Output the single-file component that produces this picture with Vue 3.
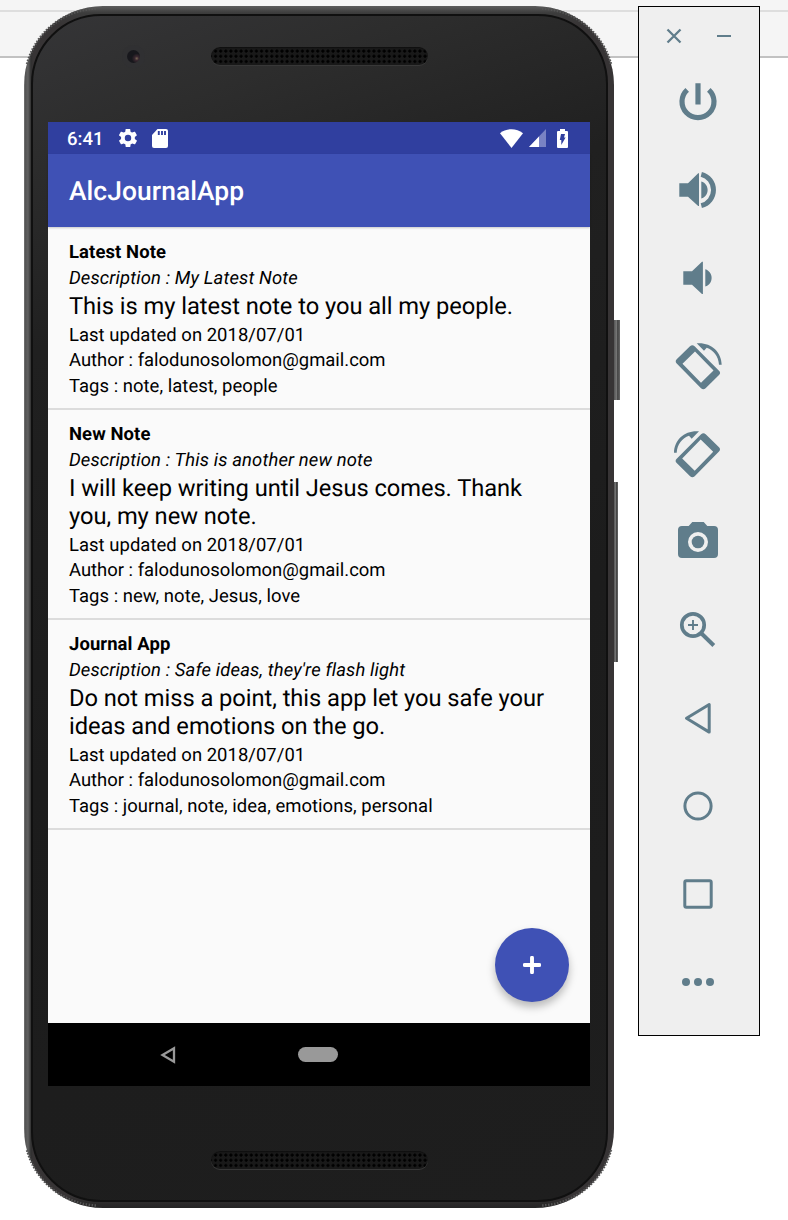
<script setup>
const notes = [
  { title: 'Latest Note', description: 'My Latest Note', body: ['This is my latest note to you all my people.'], tags: 'note, latest, people' },
  { title: 'New Note', description: 'This is another new note', body: ['I will keep writing until Jesus comes. Thank', 'you, my new note.'], tags: 'new, note, Jesus, love' },
  { title: 'Journal App', description: "Safe ideas, they're flash light", body: ['Do not miss a point, this app let you safe your', 'ideas and emotions on the go.'], tags: 'journal, note, idea, emotions, personal' }
]
</script>

<template>
  <div class="page">
    <div class="phone">
      <svg class="knurl" viewBox="0 0 590 1202">
        <path d="M3 58A75 75 0 0 1 72 2.500M518 2.500A75 75 0 0 1 587 58M587 1144A75 75 0 0 1 518 1199.500M72 1199.500A75 75 0 0 1 3 1144" />
      </svg>
      <div class="face">
        <div class="top-bezel">
          <span class="camera"><i></i></span>
          <span class="speaker"></span>
        </div>
        <div class="screen">
          <div class="status">
            <span class="clock">6:41</span>
            <svg class="gear" width="22" height="22" viewBox="0 0 24 24"><path fill="#fff" d="M19.4 13c0-.3.1-.6.1-1s0-.7-.1-1l2.1-1.6c.2-.2.2-.4.1-.6l-2-3.5c-.1-.2-.4-.3-.6-.2l-2.5 1c-.5-.4-1.1-.7-1.7-1l-.4-2.6c0-.2-.2-.4-.5-.4h-4c-.2 0-.4.2-.5.4L9 5.100c-.6.3-1.200.6-1.700 1l-2.500-1c-.2-.1-.5 0-.6.2l-2 3.500c-.1.2-.1.5.1.6L4.500 11c0 .3-.1.700-.1 1s0 .7.100 1l-2.100 1.600c-.2.2-.2.4-.1.6l2 3.500c.1.2.4.3.6.2l2.500-1c.5.4 1.100.7 1.700 1l.4 2.600c0 .2.2.4.5.4h4c.2 0 .5-.2.5-.4l.4-2.600c.6-.3 1.200-.6 1.700-1l2.500 1c.2.1.5 0 .6-.2l2-3.500c.1-.2.1-.5-.1-.6L19.400 13zM12 15.500a3.500 3.500 0 1 1 0-7 3.500 3.500 0 0 1 0 7z"/></svg>
            <svg class="sd" width="16" height="19" viewBox="0 0 16 19"><path fill="#fff" d="M5.500 0H14q2 0 2 2V17q0 2-2 2H2q-2 0-2-2V6z"/><path stroke="#303f9f" stroke-width="1.900" d="M6.800 2v4M10 2v4M13 2v4"/></svg>
            <svg class="wifi" width="23" height="19" viewBox="0 0 23 19"><path fill="#fff" d="M0 4.200C6.500-1.100 16.500-1.100 23 4.200L11.500 19z"/></svg>
            <svg class="signal" width="17" height="18" viewBox="0 0 17 18"><path fill="#7a83c4" d="M17 0V18H0z"/><path fill="#fff" d="M10 7.400V18H0z"/></svg>
            <svg width="11" height="19" viewBox="0 0 11 19"><path fill="#fff" d="M3 0h5v2h2q1 0 1 1v15q0 1-1 1H1q-1 0-1-1V3q0-1 1-1h2z"/><path fill="#303f9f" d="M4 5h4L7 8.500h1.600L4.300 16V11H2.800z"/></svg>
          </div>
          <header class="appbar">AlcJournalApp</header>
          <main class="list">
            <article v-for="n in notes" :key="n.title" class="note">
              <strong>{{ n.title }}</strong>
              <em>Description : {{ n.description }}</em>
              <p><span v-for="l in n.body" :key="l">{{ l }}</span></p>
              <div class="meta">Last updated on 2018/07/01</div>
              <div>Author : falodunosolomon@gmail.com</div>
              <div class="meta">Tags : {{ n.tags }}</div>
            </article>
            <button class="fab" aria-label="Add"><svg width="18" height="18" viewBox="0 0 18 18"><path d="M9 1.700V16.300M1.700 9H16.300" stroke="#fff" stroke-width="3.900" stroke-linecap="round"/></svg></button>
          </main>
          <nav class="nav">
            <svg width="16" height="18" viewBox="0 0 16 18"><path d="M2.500 9L14 2.300V15.700z" fill="none" stroke="#999" stroke-width="2.300"/></svg>
            <span class="pill"></span>
          </nav>
        </div>
        <div class="bottom-bezel"><span class="speaker"></span></div>
      </div>
      <i class="key power"></i>
      <i class="key volume"></i>
    </div>

    <aside class="tools">
      <div class="window">
        <svg width="16" height="16" viewBox="0 0 16 16"><path d="M1.500 1.500L14.500 14.500M14.500 1.500L1.500 14.500" class="line" stroke-width="2.300"/></svg>
        <svg width="16" height="16" viewBox="0 0 16 16"><path d="M1 8H15" class="line" stroke-width="2"/></svg>
      </div>
      <svg viewBox="0 0 60 60"><path class="line" stroke-width="5.200" d="M19.200 17.800A16 16 0 1 0 40.800 17.800M30 11.300V32.500"/></svg>
      <svg viewBox="0 0 60 60"><path class="fill" d="M11.300 23.300H20L30.200 13.300H31V46H30.200L20 36.700H11.300zM33.300 21.500C41.800 24 41.800 36.200 33.300 38.600z"/><path class="line" stroke-width="4.900" d="M33.300 14.300A16.200 16.200 0 0 1 33.300 45.700"/></svg>
      <svg viewBox="0 0 60 60"><path class="fill" d="M15.300 23.300H24L34 13.700H34.900V46H34L24 36.700H15.300zM37.300 21.300C45.800 24 45.800 36 37.300 38.600z"/></svg>
      <svg viewBox="0 0 60 60">
        <path class="fill" fill-rule="evenodd" d="M22 10.300Q24.300 8.200 26.600 10.300L51 34.700Q53.200 36.900 51 39L37.600 52.300Q35.300 54.300 33 52.300L8.700 27.500Q6.700 25.100 8.700 23.200zM27 15.400L14.500 27.700 33 46.700 45.500 34.500z"/>
        <path class="fill" d="M28.700 7.300C42.500 6 53.500 15.500 53.700 28.700H51C50.500 20.300 45.500 14 38.700 11.700L36 14.700z"/>
      </svg>
      <svg viewBox="0 0 60 60"><g transform="matrix(-1 0 0 1 59.7 0)">
        <path class="fill" fill-rule="evenodd" d="M22 10.300Q24.300 8.200 26.600 10.300L51 34.700Q53.200 36.900 51 39L37.600 52.300Q35.300 54.300 33 52.300L8.700 27.500Q6.700 25.100 8.700 23.200zM27 15.400L14.500 27.700 33 46.700 45.500 34.500z"/>
        <path class="fill" d="M28.700 7.300C42.500 6 53.500 15.500 53.700 28.700H51C50.500 20.300 45.500 14 38.700 11.700L36 14.700z"/>
      </g></svg>
      <svg viewBox="0 0 60 60"><path class="fill" fill-rule="evenodd" d="M14 14H20.700L24.300 10H35.700L39.300 14H46Q50 14 50 18V42Q50 46 46 46H14Q10 46 10 42V18Q10 14 14 14zM30 20A10 10 0 1 0 30 40A10 10 0 1 0 30 20z"/><circle class="fill" cx="30" cy="30" r="6.300"/></svg>
      <svg viewBox="0 0 60 60"><circle class="line" cx="25" cy="25" r="11.200" stroke-width="3.700"/><path class="line" stroke-width="1.900" d="M20 25H30M25 20V30"/><path class="line" stroke-width="4" d="M33 33L45.800 45.500"/></svg>
      <svg viewBox="0 0 60 60"><path class="line" stroke-width="3" stroke-linejoin="round" d="M18.500 30.300L41.200 16.500V44.100z"/></svg>
      <svg viewBox="0 0 60 60"><circle class="line" cx="30" cy="30" r="13.100" stroke-width="3"/></svg>
      <svg viewBox="0 0 60 60"><rect class="line" x="16.800" y="16.800" width="26.400" height="26.400" rx="1.500" stroke-width="3"/></svg>
      <svg viewBox="0 0 60 60"><circle class="fill" cx="18" cy="30" r="4"/><circle class="fill" cx="30" cy="30" r="4"/><circle class="fill" cx="42" cy="30" r="4"/></svg>
    </aside>
  </div>
</template>

<style>
body { margin: 0; background: #fff; }
</style>
<style scoped>
* { box-sizing: border-box; }
.page {
  width: 788px; height: 1220px; overflow: hidden; padding: 6px 0 0 24px;
  display: flex; align-items: flex-start; gap: 24px;
  font-family: Roboto, sans-serif; text-rendering: geometricPrecision;
  background: linear-gradient(#f5f5f5 0 10px, #dedede 10px 12px, #f5f5f5 12px 56px, #c2c2c2 56px 58px, #fff 58px);
}
.phone {
  position: relative; flex: none; width: 590px; height: 1202px; padding: 8px 6px 6px 7px;
  border-radius: 79px;
  background: linear-gradient(90deg, #777 0, #555 1.5px, #606060 4px, #303030 7px, transparent 9px) 0 0 / 50% 100% no-repeat,
    linear-gradient(180deg, #5c5c5c 0, #3c3c3c 7px, #373435 20px, #373435 1190px, #242424);
}
.knurl { position: absolute; left: 0; top: 0; width: 590px; height: 1202px; overflow: visible; }
.knurl path { fill: none; stroke: #555; stroke-width: 2.500; stroke-dasharray: 1.500 1.500; }
.face {
  position: relative; width: 577px; height: 1188px; border: 2px solid #101010; border-radius: 70px; padding: 0 15px;
  background: linear-gradient(160deg, #353537 0, #2d2d2d 10%, #202020 24%, #1c1c1c 55%, #1e1e1e);
}
.top-bezel { height: 106px; display: flex; padding: 29px 0 0 73.500px; }
.camera { width: 23px; height: 23px; margin: 0 78px 0 0; border-radius: 50%; background: #303032; display: flex; align-items: center; justify-content: center; }
.camera i { width: 13px; height: 13px; border-radius: 50%; background: radial-gradient(circle at 75% 65%, #765 0, #3a2830 2px, #17171c 5px); }
.speaker {
  display: block; width: 217px; height: 18px; margin-top: 2px; border-radius: 9px; background-color: #191919;
  background-image: radial-gradient(circle at center, #000 0 1.200px, transparent 1.800px); background-size: 5.120px 5.200px; background-position: 2px 1.500px;
  box-shadow: 0 1px 0 #383838, inset 0 1px 1px #101010;
}
.top-bezel .speaker { margin-left: -12px; }
.screen { width: 542px; height: 964px; display: flex; flex-direction: column; background: #fafafa; }
.status { height: 32px; flex: none; background: #303f9f; display: flex; align-items: center; padding: 0 22px 0 19px; }
.clock { color: #fff; font-weight: 500; font-size: 18.500px; width: 50px; padding-top: 1px; }
.sd { margin-left: 13px; }
.wifi { margin-left: auto; margin-right: 6px; }
.signal { margin-right: 11px; }
.appbar { position: relative; z-index: 1; height: 73px; flex: none; background: #3f51b5; color: #fff; font-weight: 500; font-size: 26.400px; letter-spacing: .07px; line-height: 77.500px; padding-left: 21px; box-shadow: 0 1px 2px #0003; }
.list { position: relative; flex: 1; color: #000; font-size: 18.450px; line-height: 25.650px; }
.note { padding: 12.200px 21px 8.500px; border-bottom: 2px solid #dcdcdc; }
.note:first-child { height: 183px; padding-top: 13px; }
.note:not(:first-child) { height: 210px; }
.note strong, .note em, .note span { display: block; white-space: nowrap; }
.note strong { letter-spacing: .1px; }
.note em { letter-spacing: .13px; }
.meta { letter-spacing: .04px; }
.note p { margin: 0; padding: 1.900px 0 1.700px; font-size: 23.700px; line-height: 27.800px; letter-spacing: -.05px; }
.fab { position: absolute; right: 21px; bottom: 21px; width: 74px; height: 74px; border: 0; padding: 0; border-radius: 50%; background: #3f51b5; display: flex; align-items: center; justify-content: center; box-shadow: 0 5px 9px #0004; }
.nav { height: 63px; flex: none; background: #000; display: flex; align-items: center; padding-left: 112px; }
.pill { width: 40px; height: 15px; margin-left: 122px; border-radius: 8px; background: #999; }
.bottom-bezel { padding: 63px 0 0 162.500px; }
.key { position: absolute; left: 590px; background: linear-gradient(90deg, #555, #777 45%, #444 60%, #666); }
.power { top: 314px; width: 6px; height: 80px; }
.volume { top: 476px; width: 4px; height: 180px; }
.tools { flex: none; width: 122px; height: 1030px; border: 1px solid #000; background: #efefef; display: flex; flex-direction: column; align-items: center; padding-right: 2px; }
.tools > svg { flex: none; width: 60px; height: 60px; margin: 14px 0; }
.window { flex: none; height: 51px; display: flex; gap: 34px; padding-top: 21px; margin-left: 1px; }
.line { fill: none; stroke: #607d8b; }
.fill { fill: #607d8b; }
</style>
